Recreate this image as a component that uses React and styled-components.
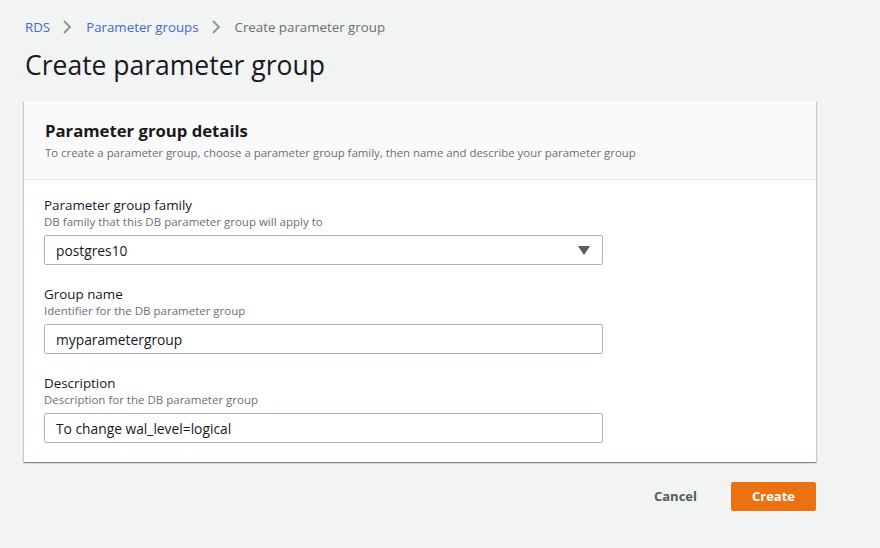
import React from "react";
import styled, { createGlobalStyle } from "styled-components";

const GlobalStyle = createGlobalStyle`
  html, body {
    margin: 0;
    padding: 0;
    background: #f2f3f3;
    font-family: "Open Sans", "Noto Sans", sans-serif;
    color: #16191f;
  }
`;

const Page = styled.div`
  width: 880px;
  height: 548px;
  padding: 17px 64px 0 24px;
  box-sizing: border-box;
`;

const Crumbs = styled.nav`
  display: flex;
  align-items: center;
  height: 20px;
  font-size: 13.3px;
  padding-left: 1px;
`;

const Crumb = styled.span`
  color: ${(p) => (p.$current ? "#687078" : "#3f6bc9")};
`;

const Chevron = styled.span`
  display: flex;
  align-items: center;
  margin: 0 14px 0 12px;
`;

const Title = styled.h1`
  margin: 8px 0 0 1px;
  font-size: 26.5px;
  font-weight: 400;
  line-height: 40px;
  color: #16191f;
`;

const Card = styled.section`
  margin-top: 16px;
  width: 792px;
  background: #fff;
  box-shadow: 0 1px 1px 0 rgba(0, 28, 36, 0.3), 1px 1px 1px 0 rgba(0, 28, 36, 0.15),
    -1px 1px 1px 0 rgba(0, 28, 36, 0.15);
`;

const CardHeader = styled.header`
  background: #fafafa;
  border-bottom: 1px solid #eaeded;
  padding: 18px 20px 17px 21px;
`;

const CardTitle = styled.h2`
  margin: 0;
  font-size: 16.7px;
  font-weight: 700;
  line-height: 24px;
`;

const CardSub = styled.p`
  margin: 1px 0 0;
  font-size: 11.4px;
  line-height: 18px;
  color: #687078;
`;

const CardBody = styled.div`
  padding: 16px 20px 19px 20px;
  display: flex;
  flex-direction: column;
  gap: 20px;
`;

const Field = styled.div`
  display: flex;
  flex-direction: column;
`;

const Label = styled.label`
  font-size: 13.4px;
  line-height: 18px;
  color: #16191f;
`;

const Hint = styled.span`
  font-size: 11.5px;
  line-height: 16px;
  color: #687078;
  margin-bottom: 5px;
`;

const Box = styled.div`
  width: 559px;
  height: 30px;
  box-sizing: border-box;
  border: 1px solid #aab7b8;
  border-radius: 2px;
  display: flex;
  align-items: center;
  justify-content: space-between;
  padding: 0 12px 0 11px;
  font-size: 13.8px;
  color: #16191f;
  background: #fff;
`;

const Actions = styled.div`
  display: flex;
  justify-content: flex-end;
  align-items: center;
  gap: 18px;
  width: 792px;
  margin-top: 19px;
`;

const TextButton = styled.button`
  background: none;
  border: none;
  font-family: inherit;
  font-size: 13px;
  font-weight: 700;
  color: #545b64;
  padding: 6px 16px;
`;

const PrimaryButton = styled.button`
  background: #ec7211;
  border: 1px solid #ec7211;
  border-radius: 2px;
  color: #fff;
  font-family: inherit;
  font-size: 13px;
  font-weight: 700;
  width: 85px;
  height: 29px;
`;

const ChevronIcon = () => (
  <svg width="10" height="14" viewBox="0 0 10 14">
    <path d="M2 1l6 6-6 6" fill="none" stroke="#879596" strokeWidth="1.8" />
  </svg>
);

const Caret = () => (
  <svg width="12" height="9" viewBox="0 0 12 9">
    <path d="M0 0h12L6 9z" fill="#545b64" />
  </svg>
);

const fields = [
  {
    label: "Parameter group family",
    hint: "DB family that this DB parameter group will apply to",
    value: "postgres10",
    select: true,
  },
  {
    label: "Group name",
    hint: "Identifier for the DB parameter group",
    value: "myparametergroup",
  },
  {
    label: "Description",
    hint: "Description for the DB parameter group",
    value: "To change wal_level=logical",
  },
];

export default function App() {
  return (
    <Page>
      <GlobalStyle />
      <Crumbs>
        <Crumb>RDS</Crumb>
        <Chevron>
          <ChevronIcon />
        </Chevron>
        <Crumb>Parameter groups</Crumb>
        <Chevron>
          <ChevronIcon />
        </Chevron>
        <Crumb $current>Create parameter group</Crumb>
      </Crumbs>
      <Title>Create parameter group</Title>
      <Card>
        <CardHeader>
          <CardTitle>Parameter group details</CardTitle>
          <CardSub>
            To create a parameter group, choose a parameter group family, then
            name and describe your parameter group
          </CardSub>
        </CardHeader>
        <CardBody>
          {fields.map((f) => (
            <Field key={f.label}>
              <Label>{f.label}</Label>
              <Hint>{f.hint}</Hint>
              <Box>
                <span>{f.value}</span>
                {f.select && <Caret />}
              </Box>
            </Field>
          ))}
        </CardBody>
      </Card>
      <Actions>
        <TextButton>Cancel</TextButton>
        <PrimaryButton>Create</PrimaryButton>
      </Actions>
    </Page>
  );
}
